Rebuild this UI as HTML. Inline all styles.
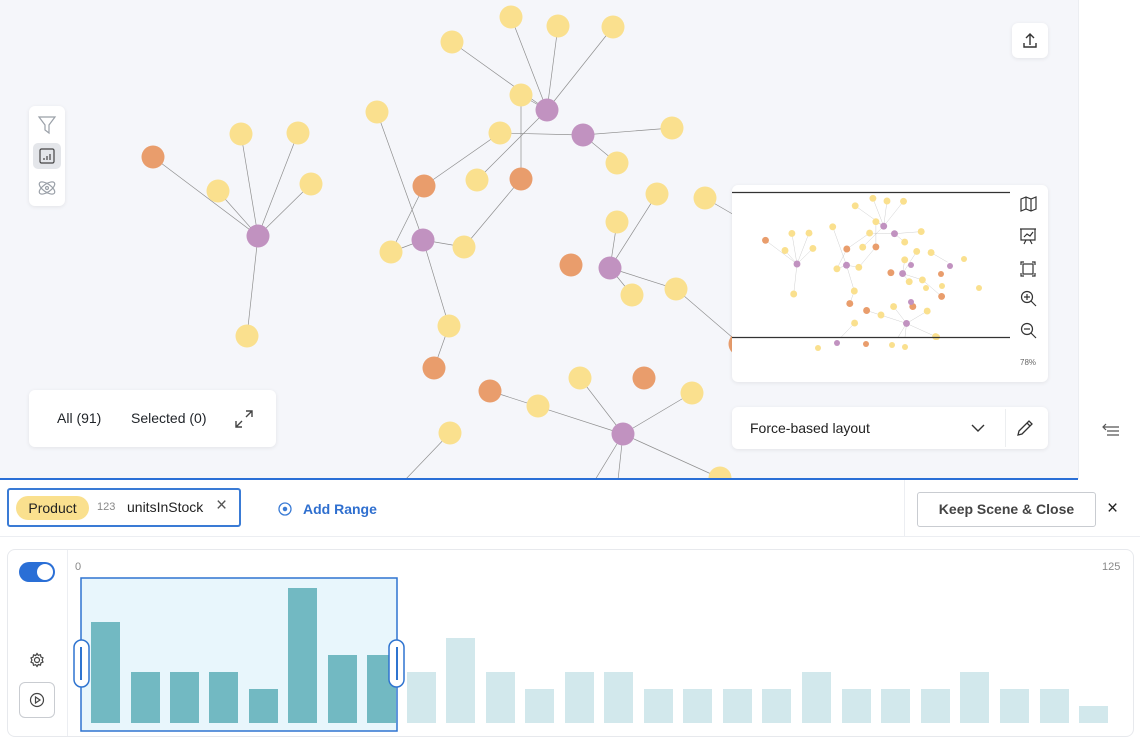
<!DOCTYPE html>
<html><head><meta charset="utf-8"><style>
*{box-sizing:border-box;margin:0;padding:0}
body{width:1140px;height:751px;overflow:hidden;background:#fff;font-family:"Liberation Sans",sans-serif;position:relative;color:#1f2328}
.abs{position:absolute}
.card{position:absolute;background:#fff;border-radius:6px;box-shadow:0 1px 4px rgba(0,0,0,.08)}
</style></head><body>
<div class="abs" style="left:0;top:0;width:1078px;height:479px;background:#f5f6fa"></div>
<div class="abs" style="left:1078px;top:0;width:62px;height:479px;background:#fff;border-left:1px solid #eceef2"></div>
<svg class="abs" style="left:0;top:0" width="1078" height="479">
<defs><g id="g">
<g stroke="#8f8f8f" stroke-width="0.7" fill="none">
<path d="M258 236L153 157M258 236L218 191M258 236L241 134M258 236L298 133M258 236L311 184M258 236L247 336"/>
<path d="M547 110L511 17M547 110L558 26M547 110L613 27M547 110L452 42M547 110L521 95M547 110L477 180M521 95L521 179M521 179L464 247M424 186L500 133L583 135L672 128M583 135L617 163M424 186L391 252M423 240L391 252M423 240L464 247M377 112L423 240L449 326L434 368"/>
<path d="M610 268L617 222M610 268L657 194M610 268L632 295M610 268L676 289L740 344M705 198L760 230"/>
<path d="M623 434L490 391M623 434L580 378M623 434L692 393M623 434L720 478M623 434L595 480M623 434L618 480M450 433L405 480"/>
</g>
<g fill="#fae08e">
<circle cx="218" cy="191" r="11.5"/><circle cx="241" cy="134" r="11.5"/><circle cx="298" cy="133" r="11.5"/><circle cx="311" cy="184" r="11.5"/><circle cx="247" cy="336" r="11.5"/>
<circle cx="511" cy="17" r="11.5"/><circle cx="558" cy="26" r="11.5"/><circle cx="613" cy="27" r="11.5"/><circle cx="452" cy="42" r="11.5"/><circle cx="521" cy="95" r="11.5"/><circle cx="500" cy="133" r="11.5"/><circle cx="477" cy="180" r="11.5"/><circle cx="672" cy="128" r="11.5"/><circle cx="617" cy="163" r="11.5"/>
<circle cx="377" cy="112" r="11.5"/><circle cx="391" cy="252" r="11.5"/><circle cx="464" cy="247" r="11.5"/><circle cx="449" cy="326" r="11.5"/>
<circle cx="617" cy="222" r="11.5"/><circle cx="657" cy="194" r="11.5"/><circle cx="632" cy="295" r="11.5"/><circle cx="676" cy="289" r="11.5"/><circle cx="705" cy="198" r="11.5"/>
<circle cx="538" cy="406" r="11.5"/><circle cx="580" cy="378" r="11.5"/><circle cx="692" cy="393" r="11.5"/><circle cx="450" cy="433" r="11.5"/><circle cx="720" cy="478" r="11.5"/>
</g>
<g fill="#e99d6c">
<circle cx="153" cy="157" r="11.5"/><circle cx="424" cy="186" r="11.5"/><circle cx="521" cy="179" r="11.5"/><circle cx="434" cy="368" r="11.5"/><circle cx="571" cy="265" r="11.5"/><circle cx="740" cy="344" r="11.5"/><circle cx="490" cy="391" r="11.5"/><circle cx="644" cy="378" r="11.5"/>
</g>
<g fill="#c192c0">
<circle cx="258" cy="236" r="11.5"/><circle cx="547" cy="110" r="11.5"/><circle cx="583" cy="135" r="11.5"/><circle cx="423" cy="240" r="11.5"/><circle cx="610" cy="268" r="11.5"/><circle cx="623" cy="434" r="11.5"/>
</g>
</g></defs>
<use href="#g"/>
</svg>
<div class="card" style="left:29px;top:106px;width:36px;height:100px"></div>
<svg class="abs" style="left:29px;top:106px" width="36" height="100" fill="none" stroke="#9aa0a8" stroke-width="1.2">
<path d="M10 11h16l-6 8v8l-4-3v-5z"/>
<rect x="4" y="37" width="28" height="26" rx="5" fill="#e4e6ea" stroke="none"/>
<rect x="11" y="43" width="14" height="14" rx="1.5" stroke="#444"/>
<path d="M15 54v-2M18 54v-4M21 54v-6" stroke="#444"/>
<ellipse cx="18" cy="82" rx="9" ry="4" transform="rotate(35 18 82)"/><ellipse cx="18" cy="82" rx="9" ry="4" transform="rotate(-35 18 82)"/><circle cx="18" cy="82" r="1.5"/>
</svg>
<div class="card" style="left:1012px;top:23px;width:36px;height:35px"></div>
<svg class="abs" style="left:1012px;top:23px" width="36" height="35" fill="none" stroke="#333" stroke-width="1.4"><path d="M18 22V11M14 15l4-4 4 4M12 20v4h12v-4"/></svg>
<div class="card" style="left:29px;top:390px;width:247px;height:57px;font-size:14px">
<span class="abs" style="left:28px;top:20px">All (91)</span>
<span class="abs" style="left:102px;top:20px">Selected (0)</span>
<svg class="abs" style="left:203px;top:17px" width="24" height="24" fill="none" stroke="#444" stroke-width="1.4"><path d="M14 4h6v6M20 4l-6 6M10 20H4v-6M4 20l6-6"/></svg>
</div>
<div class="card" style="left:732px;top:185px;width:316px;height:197px;overflow:hidden">
<svg class="abs" style="left:0;top:0" width="316" height="197">
<g transform="translate(-12.4,8.2) scale(0.3)"><use href="#g"/></g>
<g fill="#fae08e"><circle cx="232" cy="74" r="3"/><circle cx="247" cy="103" r="3"/><circle cx="194" cy="103" r="3"/><circle cx="210" cy="101" r="3"/></g>
<circle cx="218" cy="81" r="3" fill="#c192c0"/><circle cx="179" cy="80" r="3" fill="#c192c0"/>
<circle cx="179" cy="117" r="3" fill="#c192c0"/><circle cx="209" cy="89" r="3" fill="#e99d6c"/>
<circle cx="105" cy="158" r="3" fill="#c192c0"/><circle cx="86" cy="163" r="3" fill="#fae08e"/><circle cx="134" cy="159" r="3" fill="#e99d6c"/><circle cx="173" cy="162" r="3" fill="#fae08e"/><circle cx="160" cy="160" r="3" fill="#fae08e"/><circle cx="205" cy="152" r="3" fill="#fae08e"/>
<path d="M0 7.5H278M0 152.5H278" stroke="#333" stroke-width="1.3"/>
</svg>
<svg class="abs" style="left:282px;top:8px" width="28" height="160" fill="none" stroke="#333" stroke-width="1.2">
<path d="M7 6l5-2 5 2 5-2v12l-5 2-5-2-5 2zM12 4v12M17 6v12"/>
<path d="M6 36h16M7 36v11h14V36M10 44l3-3 3 2 3-4M12 47l-2 4M16 47l2 4"/>
<path d="M7 72v-3h3M18 69h3v3M21 80v3h-3M10 83H7v-3"/><rect x="9" y="71" width="10" height="10"/>
<circle cx="13" cy="104" r="5.5"/><path d="M17 108l5 5M13 101v6M10 104h6"/>
<circle cx="13" cy="136" r="5.5"/><path d="M17 140l5 5M10 136h6"/>
</svg>
<span class="abs" style="left:288px;top:173px;font-size:8px;color:#666">78%</span>
</div>
<div class="card" style="left:732px;top:407px;width:316px;height:42px;font-size:14px">
<span class="abs" style="left:18px;top:13px;color:#222">Force-based layout</span>
<svg class="abs" style="left:238px;top:14px" width="16" height="14" fill="none" stroke="#333" stroke-width="1.4"><path d="M2 4l6 6 6-6"/></svg>
<div class="abs" style="left:273px;top:2px;width:1px;height:38px;background:#eceef0"></div>
<svg class="abs" style="left:282px;top:10px" width="22" height="22" fill="none" stroke="#333" stroke-width="1.3"><path d="M4 18l1-4L15 4l3 3L8 17zM13 6l3 3"/></svg>
</div>
<svg class="abs" style="left:1100px;top:420px" width="22" height="20" fill="none" stroke="#555" stroke-width="1.2"><path d="M6 4L3 7l3 3M3 7h16M7 11h12M7 15h12"/></svg>
<div class="abs" style="left:0;top:478px;width:1078px;height:2px;background:#2a6fd6"></div>
<div class="abs" style="left:0;top:536px;width:1140px;height:1px;background:#eceef2"></div>
<div class="abs" style="left:904px;top:480px;width:1px;height:56px;background:#eceef2"></div>
<div class="abs" style="left:7px;top:488px;width:234px;height:39px;border:2px solid #3a7bd5;border-radius:3px;font-size:14px">
<span class="abs" style="left:7px;top:6px;width:73px;height:24px;background:#fae08e;border-radius:12px;text-align:center;line-height:24px;color:#222">Product</span>
<span class="abs" style="left:88px;top:11px;font-size:11px;color:#888">123</span>
<span class="abs" style="left:118px;top:9px;color:#222">unitsInStock</span>
<span class="abs" style="left:207px;top:5px;font-size:19px;color:#555">×</span>
</div>
<svg class="abs" style="left:277px;top:501px" width="16" height="16" fill="none" stroke="#3a7bd5" stroke-width="1.3"><circle cx="8" cy="8" r="6"/><circle cx="8" cy="8" r="1.6" fill="#3a7bd5"/></svg>
<span class="abs" style="left:303px;top:501px;font-size:14px;font-weight:bold;color:#2f6fcf">Add Range</span>
<div class="abs" style="left:917px;top:492px;width:179px;height:35px;border:1px solid #c9ccd1;border-radius:3px;font-size:14px;font-weight:bold;color:#444;text-align:center;line-height:33px">Keep Scene &amp; Close</div>
<span class="abs" style="left:1107px;top:498px;font-size:19px;color:#222">×</span>
<div class="abs" style="left:7px;top:549px;width:1127px;height:188px;border:1px solid #e7e9ed;border-radius:8px"></div>
<div class="abs" style="left:67px;top:550px;width:1px;height:186px;background:#eceef2"></div>
<div class="abs" style="left:19px;top:562px;width:36px;height:20px;border-radius:10px;background:#2a6fd6"><div class="abs" style="left:18px;top:2px;width:16px;height:16px;border-radius:8px;background:#fff"></div></div>
<svg class="abs" style="left:28px;top:651px" width="18" height="18" fill="none" stroke="#444" stroke-width="1.2"><circle cx="9" cy="9" r="2.5"/><path d="M9 2.5l1.3 1.8 2.2-.6.4 2.2 2.1.9-.9 2.1.9 2.1-2.1.9-.4 2.2-2.2-.6L9 15.5l-1.3-1.8-2.2.6-.4-2.2-2.1-.9.9-2.1-.9-2.1 2.1-.9.4-2.2 2.2.6z"/></svg>
<div class="abs" style="left:19px;top:682px;width:36px;height:36px;border:1px solid #c9ccd1;border-radius:6px"></div>
<svg class="abs" style="left:28px;top:691px" width="18" height="18" fill="none" stroke="#444" stroke-width="1.2"><circle cx="9" cy="9" r="6.5"/><path d="M7.5 6v6l4.5-3z"/></svg>
<span class="abs" style="left:75px;top:561px;font-size:11px;color:#888">0</span>
<span class="abs" style="left:1102px;top:561px;font-size:11px;color:#888">125</span>
<svg class="abs" style="left:0;top:570px" width="1140" height="170">
<rect x="81" y="8" width="316" height="153" fill="#e8f6fc" stroke="#2f74d0" stroke-width="1.5"/>
<g fill="#72b9c2">
<rect x="91" y="52" width="29" height="101"/><rect x="131" y="102" width="29" height="51"/><rect x="170" y="102" width="29" height="51"/><rect x="209" y="102" width="29" height="51"/><rect x="249" y="119" width="29" height="34"/><rect x="288" y="18" width="29" height="135"/><rect x="328" y="85" width="29" height="68"/><rect x="367" y="85" width="29" height="68"/>
</g>
<g fill="#d2e8ec">
<rect x="407" y="102" width="29" height="51"/><rect x="446" y="68" width="29" height="85"/><rect x="486" y="102" width="29" height="51"/><rect x="525" y="119" width="29" height="34"/><rect x="565" y="102" width="29" height="51"/><rect x="604" y="102" width="29" height="51"/><rect x="644" y="119" width="29" height="34"/><rect x="683" y="119" width="29" height="34"/><rect x="723" y="119" width="29" height="34"/><rect x="762" y="119" width="29" height="34"/><rect x="802" y="102" width="29" height="51"/><rect x="842" y="119" width="29" height="34"/><rect x="881" y="119" width="29" height="34"/><rect x="921" y="119" width="29" height="34"/><rect x="960" y="102" width="29" height="51"/><rect x="1000" y="119" width="29" height="34"/><rect x="1040" y="119" width="29" height="34"/><rect x="1079" y="136" width="29" height="17"/>
</g>
<g fill="#fff" stroke="#2f74d0" stroke-width="1.5">
<rect x="74" y="70" width="15" height="47" rx="7.5"/><rect x="389" y="70" width="15" height="47" rx="7.5"/>
</g>
<path d="M81 77v33M397 77v33" stroke="#2f74d0" stroke-width="2"/>
</svg>
</body></html>
